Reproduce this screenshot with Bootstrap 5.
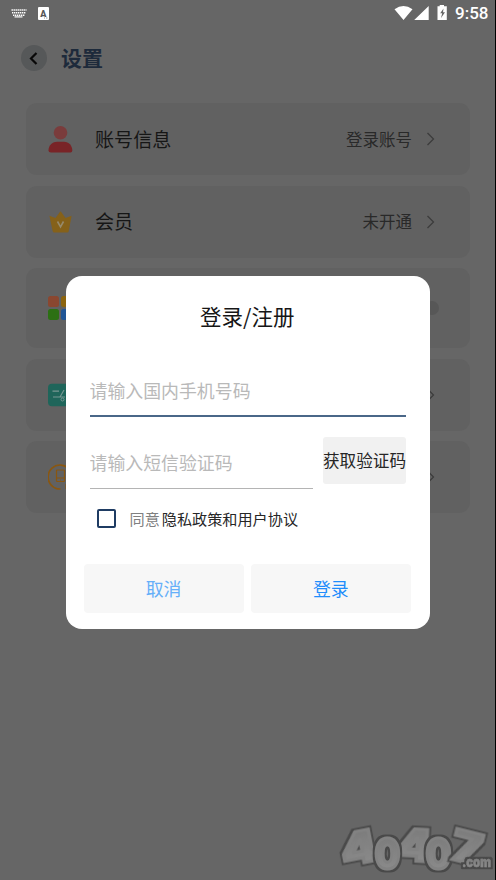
<!DOCTYPE html>
<html lang="zh-CN">
<head>
<meta charset="utf-8">
<meta name="viewport" content="width=device-width, initial-scale=1">
<title>设置</title>
<link href="https://cdn.jsdelivr.net/npm/bootstrap@5.3.0/dist/css/bootstrap.min.css" rel="stylesheet">
<script src="https://cdn.jsdelivr.net/npm/bootstrap@5.3.0/dist/js/bootstrap.bundle.min.js" defer></script>
<style>
html,body{height:100%}
body{font-family:"Noto Sans CJK SC",sans-serif;background:#666;overflow:hidden;color:#161616}
.screen{width:496px;height:880px;border-right:1px solid #000}
svg{display:block;flex:none}
.status{height:26px;padding:0 7px 0 11px}
.input-badge{margin-left:11px}
.clock{font:500 17px/26px Roboto,sans-serif;color:#fff;width:33px;white-space:nowrap}
.heading{height:64px;padding-left:21px;gap:14px}
.back{width:26px;height:26px;background:#565859}
.heading h1{font-size:21px;font-weight:700;color:#1d2a3b;line-height:30px;padding-bottom:2px}
.settings{padding:13px 25px 0 26px;gap:10.5px}
.tile{height:72px;border-radius:11px;background:#616161;padding:0 35px 0 22px}
.tile.tall{height:80px}
.tile-icon{width:26px;margin-right:21px}
.tile-name{font-size:19.1px}
.tile-value{font-size:16.5px;color:#292929;margin-right:14px}
.switch-dot{width:14px;height:14px;background:#575757;margin-right:-4px}
.dialog-box{left:65.500px;top:276px;width:364.500px;height:353px;border-radius:16px;padding:0 19px 0 18px;z-index:5}
.dialog-title{font-size:21.5px;line-height:32px;padding-top:24px;height:83px}
.fields{padding:0 5px 0 6px}
.field{height:58px;border-bottom:2px solid #4a6788;border-radius:0;padding:6px 0 0;font-size:17.9px;background:none}
.field.code{width:223px;height:52px;border-bottom:1.5px solid #b4b4b4;padding:0 0 2px}
.form-control.field::placeholder{color:#b9b9b9;opacity:1}
.get-code{width:83px;height:47px;font-size:16.6px;background:#f1f1f1;color:#262626;padding:0;border-radius:3px;border:0;white-space:nowrap}
.code-row{margin-top:20px;height:52px}
.agree{height:29px;margin-top:15px;padding-left:7px;font-size:15.15px;color:#262626}
.agree .form-check-input{width:19px;height:19px;border:2px solid #1f3c63;border-radius:2px;margin:0 14px 0 0}
.muted{color:#808080;margin-right:2px}
.actions{gap:7px;margin-top:31px}
.actions .btn{height:49px;border:0;border-radius:4px;background:#f7f7f7;font-size:17.9px;padding:0}
.cancel{color:#66aff9!important}.login{color:#1f8dfb!important}
.brand{right:0;bottom:0}
</style>
</head>
<body>
<div class="screen position-relative overflow-hidden">
  <div class="status d-flex align-items-center">
    <svg width="16" height="9" viewBox="0 0 16 9" stroke="#fff" fill="none"><path d="M.5 1h15M1 3.7h14M2 6.2h12" stroke-width="1.5" stroke-dasharray="1.4 .6"/><path d="M3.5 7.9h8" stroke-width="1.2"/></svg>
    <svg width="11" height="13" viewBox="0 0 11 13" class="input-badge me-auto"><rect width="11" height="13" rx="1" fill="#fff"/><text x="5.3" y="9.500" text-anchor="middle" font-family="Roboto" font-weight="900" font-size="9" fill="#555">A</text><path d="M6 11h1m1 0h1.500" stroke="#999"/></svg>
    <svg width="61" height="17" viewBox="394 4 61 17" fill="#fff"><path d="M394.500 8.200Q403.500 2 412.500 8.200L403.500 19ZM428.700 5v14h-14.500ZM437.500 5.300h2.200V4h4.300v1.300h2.800V19H437.500Z"/><path d="m443.500 7.500-3.300 4.700h2L441 17l4-5.700h-2Z" fill="#666"/></svg>
    <span class="clock">9:58</span>
  </div>
  <header class="heading d-flex align-items-center">
    <span class="back rounded-circle d-flex align-items-center justify-content-center"><svg width="10" height="13" viewBox="0 0 10 13" fill="none" stroke="#080808" stroke-width="2.200"><path d="M7.500 1 2 6.500l5.500 5.500"/></svg></span>
    <h1 class="m-0">设置</h1>
  </header>
  <main class="settings d-flex flex-column">
    <div class="tile d-flex align-items-center">
      <svg class="tile-icon" width="26" height="28" viewBox="0 0 26 28"><circle cx="12.500" cy="7.700" r="6.800" fill="#7a3c3c"/><path d="M.5 25.500C.5 20 5 16.700 9 16.700h7c5 0 8.300 4 8.300 8.800q0 2.100-1.800 2.100H3Q.5 27.600.5 25.500Z" fill="#792427"/></svg>
      <span class="tile-name">账号信息</span><span class="tile-value ms-auto">登录账号</span>
      <svg width="9" height="14" viewBox="0 0 9 14" fill="none" stroke="#3c3c3c" stroke-width="1.300"><path d="m1.500 1 6 6-6 6"/></svg>
    </div>
    <div class="tile d-flex align-items-center">
      <svg class="tile-icon" width="26" height="22" viewBox="0 0 26 22"><path d="M1.500 5.200q0-.5.600-.3L7.500 7 12 .8q.5-.6 1 0L17.500 7l5.400-2.100q.6-.2.600.3l-2.800 15q-.2 1.300-1.500 1.300h-13q-1.300 0-1.500-1.300Z" fill="#85611a"/><path d="m9.500 10.500 3 5.300 3-5.300" fill="none" stroke="#968a6c" stroke-width="1.600"/></svg>
      <span class="tile-name">会员</span><span class="tile-value ms-auto">未开通</span>
      <svg width="9" height="14" viewBox="0 0 9 14" fill="none" stroke="#3c3c3c" stroke-width="1.300"><path d="m1.500 1 6 6-6 6"/></svg>
    </div>
    <div class="tile tall d-flex align-items-center">
      <svg class="tile-icon" width="26" height="26" viewBox="0 0 26 26"><rect x="0" y="1" width="11" height="11" rx="2.500" fill="#8a4730"/><rect x="13" y="1" width="11" height="11" rx="2.500" fill="#8c640e"/><rect x="0" y="14" width="11" height="11" rx="2.500" fill="#2c7013"/><rect x="13" y="14" width="11" height="11" rx="2.500" fill="#205596"/></svg>
      <span class="switch-dot rounded-circle ms-auto"></span>
    </div>
    <div class="tile d-flex align-items-center">
      <svg class="tile-icon" width="26" height="24" viewBox="0 0 26 24"><rect y=".800" width="26" height="22.500" rx="4" fill="#1f655a"/><path d="M4.500 8.200H11M5 14h7l4-7M12 14h5" stroke="#789792" stroke-width="1.200" fill="none"/><circle cx="14.500" cy="16.500" r="1.500" fill="none" stroke="#789792"/></svg>
      <svg class="ms-auto" width="9" height="14" viewBox="0 0 9 14" fill="none" stroke="#3c3c3c" stroke-width="1.300"><path d="m1.500 1 6 6-6 6"/></svg>
    </div>
    <div class="tile d-flex align-items-center">
      <svg class="tile-icon" width="26" height="28" viewBox="0 0 26 28" fill="none" stroke="#8a5710"><path d="M12.500 26A12 12 0 1 1 24 15.500" stroke-width="1.700"/><rect x="8.500" y="7" width="8" height="11.500" rx=".8" stroke-width="1.200"/><path d="M8.500 15h8M12 17h1M18 21v5"/></svg>
      <svg class="ms-auto" width="9" height="14" viewBox="0 0 9 14" fill="none" stroke="#3c3c3c" stroke-width="1.300"><path d="m1.500 1 6 6-6 6"/></svg>
    </div>
  </main>

  <form class="dialog-box position-absolute bg-white">
    <h2 class="dialog-title m-0 fw-normal text-center">登录/注册</h2>
    <div class="fields">
      <input class="form-control field border-top-0 border-start-0 border-end-0 shadow-none" placeholder="请输入国内手机号码">
      <div class="code-row d-flex justify-content-between align-items-start">
        <input class="form-control field code border-top-0 border-start-0 border-end-0 shadow-none" placeholder="请输入短信验证码">
        <button type="button" class="btn get-code">获取验证码</button>
      </div>
      <div class="agree d-flex align-items-center">
        <input class="form-check-input" type="checkbox" id="agree">
        <label for="agree"><span class="muted">同意</span>隐私政策和用户协议</label>
      </div>
    </div>
    <div class="actions d-flex">
      <button type="button" class="btn cancel flex-fill">取消</button>
      <button type="button" class="btn login flex-fill">登录</button>
    </div>
  </form>

  <svg class="brand position-absolute" width="165" height="70" viewBox="331 810 165 70" font-family="Inter,sans-serif" font-weight="900" text-anchor="middle">
    <defs>
      <linearGradient id="silver" x2="0" y2="1"><stop stop-color="#787878"/><stop offset="1" stop-color="#8e8e8e"/></linearGradient>
      <filter id="rim" x="-20%" y="-20%" width="140%" height="140%"><feMorphology in="SourceAlpha" operator="dilate" radius="2" result="wide"/><feFlood flood-color="#494949"/><feComposite in2="wide" operator="in" result="edge"/><feMerge><feMergeNode in="edge"/><feMergeNode in="SourceGraphic"/></feMerge></filter>
    </defs>
    <g fill="url(#silver)" stroke="#828282" stroke-width="3" font-size="44">
      <text filter="url(#rim)" transform="translate(363 863) rotate(-11) scale(1.200 1)">4</text>
      <text filter="url(#rim)" transform="translate(415 861) rotate(3) scale(1.150 1)">4</text>
      <text filter="url(#rim)" transform="translate(388.500 868.500) scale(.85 1)" font-size="42">0</text>
      <text filter="url(#rim)" transform="translate(439.500 868.500) scale(.85 1)" font-size="42">0</text>
      <text filter="url(#rim)" transform="translate(464 862) rotate(14) scale(1.200 1)" font-size="42">7</text>
      <text filter="url(#rim)" x="477.500" y="867" font-size="13" stroke-width=".5" textLength="29" lengthAdjust="spacingAndGlyphs">.com</text>
    </g>
  </svg>
</div>
</body>
</html>
